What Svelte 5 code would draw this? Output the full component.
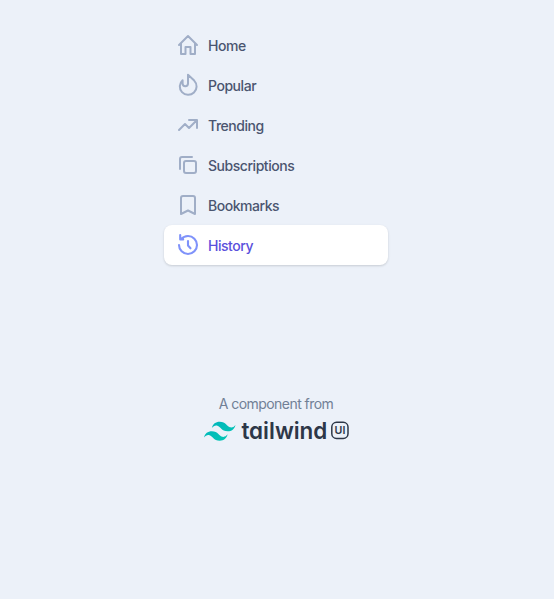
<script>
  const items = [
    { label: 'Home', paths: ['M3 12l9-9 9 9M5 10.5V21h4.5v-7h5v7H19V10.5'] },
    { label: 'Popular', paths: ['M12 1.8v8.7a2.7 2.7 0 01-5.4 0V7.2A8.4 8.4 0 1018.2 7.6L12 1.8z'] },
    { label: 'Trending', paths: ['M13 7h8v8M21 7l-8 8-4-4-6 6'] },
    { label: 'Subscriptions', paths: ['M4 16V6a2 2 0 012-2h10', 'M10 8h8a2 2 0 012 2v8a2 2 0 01-2 2h-8a2 2 0 01-2-2v-8a2 2 0 012-2z'] },
    { label: 'Bookmarks', paths: ['M5 5a2 2 0 012-2h10a2 2 0 012 2v16l-7-3.5L5 21V5z'] },
    { label: 'History', paths: ['M3 12a9 9 0 109-9c-2.9 0-5.2 1.2-6.9 3.2M4.2 2v4.4h3', 'M12 8v4.5l2.5 2.8'], active: true },
  ];
</script>

<main>
  <nav>
    {#each items as item}
      <a href="#{item.label.toLowerCase()}" class:active={item.active}>
        <svg class="icon" viewBox="0 0 24 24" aria-hidden="true">
          {#each item.paths as d}<path {d} />{/each}
        </svg>
        <span>{item.label}</span>
      </a>
    {/each}
  </nav>
  <footer>
    <p>A component from</p>
    <svg class="logo" width="146" height="30" viewBox="0 0 146 30">
      <defs>
        <linearGradient id="wave" x1="0" y1="0" x2="1" y2="1">
          <stop offset="0" stop-color="#00b3bd" />
          <stop offset="1" stop-color="#05c9b3" />
        </linearGradient>
      </defs>
      <path
        transform="translate(0 5.6) scale(.583)"
        fill="url(#wave)"
        d="M13.5 11.1C15.3 3.9 19.8.3 27 .3c10.8 0 12.15 8.1 17.55 9.45 3.6.9 6.75-.45 9.45-4.05-1.8 7.2-6.3 10.8-13.5 10.8-10.8 0-12.15-8.1-17.55-9.45-3.6-.9-6.75.45-9.45 4.05zM0 27.3c1.8-7.2 6.3-10.8 13.5-10.8 10.8 0 12.15 8.1 17.55 9.45 3.6.9 6.75-.45 9.45-4.05-1.8 7.2-6.3 10.8-13.5 10.8-10.8 0-12.15-8.1-17.55-9.45-3.6-.9-6.75.45-9.45 4.05z"
      />
      <text class="word" x="37.4" y="22.8" textLength="86" lengthAdjust="spacingAndGlyphs">tailwind</text>
      <rect x="127.8" y="6.3" width="16.2" height="16.2" rx="4.8" fill="none" stroke="#2d3748" stroke-width="1.5" />
      <text class="badge" x="130.6" y="18.2" textLength="10.8" lengthAdjust="spacingAndGlyphs">UI</text>
    </svg>
  </footer>
</main>

<style>
  :global(body) {
    margin: 0;
    background: #ecf1f9;
  }
  main {
    box-sizing: border-box;
    min-height: 599px;
    padding-top: 25px;
    font-family: Inter, 'Liberation Sans', sans-serif;
    background: #ecf1f9;
  }
  nav {
    width: 224px;
    margin-left: 164px;
  }
  a {
    display: flex;
    align-items: center;
    box-sizing: border-box;
    height: 40px;
    padding: 0 12px;
    border-radius: 8px;
    color: #4a5570;
    font-size: 14px;
    font-weight: 500;
    letter-spacing: -0.46px;
    line-height: 20px;
    text-decoration: none;
  }
  a span {
    padding: 2px 0 0 8px;
  }
  .icon {
    width: 24px;
    height: 24px;
    fill: none;
    stroke: #a0aec7;
    stroke-width: 2;
    stroke-linecap: round;
    stroke-linejoin: round;
  }
  .active {
    background: #fff;
    color: #5a50dc;
    box-shadow: 0 1px 3px rgba(0, 0, 0, 0.1), 0 1px 2px rgba(0, 0, 0, 0.06);
  }
  .active .icon {
    stroke: #7f92fa;
    stroke-width: 2.1;
  }
  footer {
    display: flex;
    flex-direction: column;
    align-items: center;
    padding-top: 129px;
  }
  p {
    margin: 0 2px 0 0;
    color: #718096;
    font-size: 14px;
    letter-spacing: -0.55px;
    line-height: 20px;
  }
  .logo {
    margin-top: 2px;
    overflow: visible;
  }
  .word {
    fill: #2d3748;
    font-size: 23px;
    font-weight: 600;
    font-feature-settings: 'cv11';
  }
  .badge {
    fill: #2d3748;
    font-size: 10.5px;
    font-weight: 600;
  }
</style>
